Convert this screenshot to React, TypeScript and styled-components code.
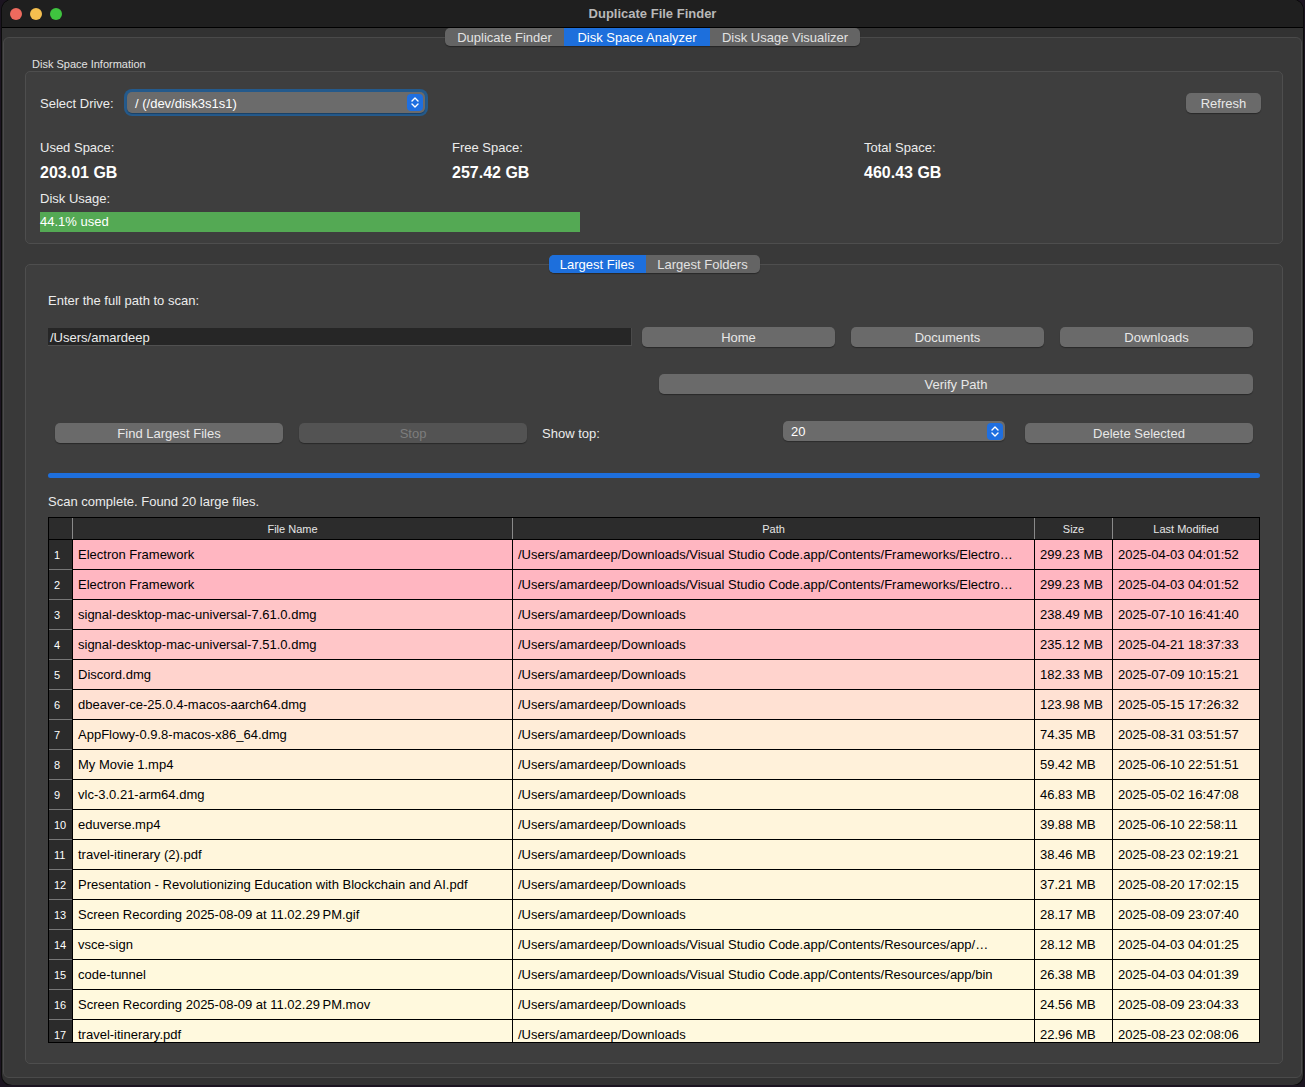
import React from 'react';
import styled, { createGlobalStyle } from 'styled-components';

const GlobalStyle = createGlobalStyle`
  html, body { margin: 0; padding: 0; background: #1b1420; }
  body { font-family: "Liberation Sans", Arial, sans-serif; -webkit-font-smoothing: antialiased; }
  * { box-sizing: border-box; }
`;

const Window = styled.div`
  margin-left: 2px;
  width: 1301px;
  height: 1085px;
  background: #323232;
  border-radius: 10px;
  overflow: hidden;
  display: flex;
  flex-direction: column;
  box-shadow: 0 0 0 1px #0c0c0c;
`;

const TitleBar = styled.div`
  height: 28px;
  flex: none;
  background: #1f1f1f;
  border-bottom: 1px solid #000;
  display: grid;
  grid-template-columns: 1fr auto 1fr;
  align-items: center;
  padding: 0 8px;
`;

const Lights = styled.div`
  display: flex;
  gap: 8px;
`;

const Light = styled.span<{ $c: string }>`
  width: 12px;
  height: 12px;
  border-radius: 50%;
  background: ${p => p.$c};
`;

const Title = styled.div`
  font-size: 13px;
  font-weight: 700;
  color: #b8b8b8;
`;

const Body = styled.div`
  flex: 1;
  display: flex;
  flex-direction: column;
  padding: 0 1px 7px 1px;
`;

const TabBar = styled.div`
  display: flex;
  justify-content: center;
  height: 18px;
  position: relative;
  z-index: 1;
  flex: none;
`;

const Segmented = styled.div`
  display: inline-flex;
  height: 18px;
  border-radius: 5px;
  background: #646464;
  overflow: hidden;
  box-shadow: 0 1px 1px rgba(0, 0, 0, 0.35);
`;

const Segment = styled.div<{ $active?: boolean; $w: number }>`
  width: ${p => p.$w}px;
  text-align: center;
  font-size: 13px;
  line-height: 17px;
  padding-top: 1px;
  color: ${p => (p.$active ? '#ffffff' : '#e2e2e2')};
  background: ${p => (p.$active ? '#1d6fdc' : 'transparent')};
  white-space: nowrap;
`;

const Pane = styled.div`
  flex: 1;
  margin-top: -9px;
  border: 1px solid #4a4a4a;
  border-radius: 6px;
  background: #393939;
  padding: 20px 18px 13px 21px;
  display: flex;
  flex-direction: column;
`;

const GroupTitle = styled.div`
  font-size: 11px;
  line-height: 13px;
  color: #e2e2e2;
  padding-left: 7px;
`;

const GroupBox = styled.div`
  border: 1px solid #4e4e4e;
  border-radius: 5px;
  background: #3e3e3e;
  padding: 17px 18px 11px 14px;
  display: flex;
  flex-direction: column;
`;

const Row = styled.div`
  display: flex;
  align-items: center;
`;

const Label = styled.div<{ $w?: number }>`
  font-size: 13px;
  line-height: 15px;
  padding-top: 1px;
  color: #ececec;
  white-space: nowrap;
  ${p => (p.$w ? `width: ${p.$w}px; flex: none;` : '')}
`;

const FocusRing = styled.div`
  width: 304px;
  height: 27px;
  padding: 3px;
  border-radius: 8px;
  background: #245a8c;
`;

const Combo = styled.div<{ $w?: number }>`
  height: ${p => (p.$w ? 20 : 21)}px;
  ${p => (p.$w ? `width: ${p.$w}px; flex: none;` : '')}
  border-radius: 5px;
  background: #6b6b6b;
  display: flex;
  align-items: center;
  justify-content: space-between;
  padding: 0 2px 0 8px;
  font-size: 13px;
  color: #ffffff;
  box-shadow: 0 1px 1px rgba(0, 0, 0, 0.3);
  span { padding-top: 1px; }
`;

const Button = styled.div<{ $w: number; $ml?: number; $disabled?: boolean }>`
  width: ${p => p.$w}px;
  margin-left: ${p => p.$ml ?? 0}px;
  flex: none;
  height: 20px;
  border-radius: 5px;
  background: ${p => (p.$disabled ? '#535353' : '#6a6a6a')};
  color: ${p => (p.$disabled ? '#7d7d7d' : '#e8e8e8')};
  font-size: 13px;
  line-height: 19px;
  padding-top: 1px;
  text-align: center;
  box-shadow: 0 1px 1px rgba(0, 0, 0, 0.35);
  white-space: nowrap;
`;

const Stats = styled.div`
  display: grid;
  grid-template-columns: repeat(3, 1fr);
  column-gap: 12px;
  margin-top: 23px;
`;

const Value = styled.div`
  margin-top: 8px;
  font-size: 16px;
  line-height: 20px;
  font-weight: 700;
  color: #ffffff;
`;

const UsageLabel = styled(Label)`
  margin-top: 7px;
`;

const UsageBar = styled.div`
  margin-top: 6px;
  height: 20px;
  display: flex;
`;

const UsageFill = styled.div`
  background: #54a954;
  color: #ffffff;
  font-size: 13px;
  line-height: 20px;
  white-space: nowrap;
`;

const InnerTabs = styled(TabBar)`
  margin-top: 11px;
`;

const GroupBox2 = styled.div`
  margin-top: -9px;
  border: 1px solid #4e4e4e;
  border-radius: 5px;
  background: #3e3e3e;
  padding: 27px 22px 20px 22px;
  display: flex;
  flex-direction: column;
`;

const PathInput = styled.div`
  width: 584px;
  height: 18px;
  flex: none;
  background: #262626;
  border-bottom: 1px solid #505050;
  border-right: 1px solid #4a4a4a;
  font-size: 13px;
  line-height: 17px;
  padding-top: 1px;
  color: #ececec;
  padding-left: 2px;
`;

const ButtonsRow = styled(Row)`
  margin-top: 19px;
  height: 20px;
`;

const VerifyRow = styled(Row)`
  margin-top: 27px;
  justify-content: flex-end;
  padding-right: 7px;
  height: 20px;
`;

const FindRow = styled.div`
  margin-top: 27px;
  height: 22px;
  display: flex;
  align-items: flex-end;
`;

const ShowTop = styled(Label)`
  align-self: center;
  margin-left: 15px;
  margin-top: 2px;
`;

const TopCombo = styled(Combo)`
  align-self: flex-start;
`;

const Progress = styled.div`
  margin-top: 30px;
  height: 5px;
  border-radius: 3px;
  background: #1e6fdc;
`;

const Status = styled(Label)`
  margin-top: 15px;
`;

const TableClip = styled.div`
  margin-top: 8px;
  width: 1212px;
  height: 526px;
  overflow: hidden;
  border: 1px solid #000;
  background: #000;
`;

const Grid = styled.div`
  display: grid;
  grid-template-columns: 23px 439px 521px 77px 1fr;
  grid-auto-rows: 29px;
  grid-template-rows: 21px;
  gap: 1px;
  background: #000;
`;

const HeadCell = styled.div<{ $first?: boolean }>`
  background: #2c2c2c;
  color: #e6e6e6;
  font-size: 11px;
  line-height: 19px;
  padding-top: 2px;
  text-align: center;
  box-shadow: ${p => (p.$first ? 'none' : '-1px 0 0 #8a8a8a')};
`;

const NumCell = styled.div<{ $first?: boolean }>`
  background: #2b2b2b;
  color: #ffffff;
  font-size: 11px;
  display: flex;
  align-items: center;
  padding-left: 5px;
  box-shadow: ${p => (p.$first ? 'none' : '0 -1px 0 #777777')};
`;

const Cell = styled.div<{ $bg: string; $pl?: number }>`
  background: ${p => p.$bg};
  color: #000;
  font-size: 13px;
  line-height: 29px;
  padding-left: ${p => p.$pl ?? 5}px;
  padding-right: 2px;
  white-space: nowrap;
  overflow: hidden;
`;

const Stepper = ({ h = 17 }: { h?: number }) => (
  <svg width="16" height={h} viewBox={`0 0 16 ${h}`}>
    <rect x="0" y="0" width="16" height={h} rx="4" fill="#1f6fe0" />
    <path d={`M5 ${h / 2 - 1.5} L8 ${h / 2 - 4.5} L11 ${h / 2 - 1.5}`} fill="none" stroke="#fff" strokeWidth="1.4" strokeLinecap="round" strokeLinejoin="round" />
    <path d={`M5 ${h / 2 + 1.5} L8 ${h / 2 + 4.5} L11 ${h / 2 + 1.5}`} fill="none" stroke="#fff" strokeWidth="1.4" strokeLinecap="round" strokeLinejoin="round" />
  </svg>
);

const DL = '/Users/amardeep/Downloads';
const VSC = '/Users/amardeep/Downloads/Visual Studio Code.app/Contents';

const rows: [string, string, number, string][] = [
  ['Electron Framework', `${VSC}/Frameworks/Electro\u2026`, 299.23, '2025-04-03 04:01:52'],
  ['Electron Framework', `${VSC}/Frameworks/Electro\u2026`, 299.23, '2025-04-03 04:01:52'],
  ['signal-desktop-mac-universal-7.61.0.dmg', DL, 238.49, '2025-07-10 16:41:40'],
  ['signal-desktop-mac-universal-7.51.0.dmg', DL, 235.12, '2025-04-21 18:37:33'],
  ['Discord.dmg', DL, 182.33, '2025-07-09 10:15:21'],
  ['dbeaver-ce-25.0.4-macos-aarch64.dmg', DL, 123.98, '2025-05-15 17:26:32'],
  ['AppFlowy-0.9.8-macos-x86_64.dmg', DL, 74.35, '2025-08-31 03:51:57'],
  ['My Movie 1.mp4', DL, 59.42, '2025-06-10 22:51:51'],
  ['vlc-3.0.21-arm64.dmg', DL, 46.83, '2025-05-02 16:47:08'],
  ['eduverse.mp4', DL, 39.88, '2025-06-10 22:58:11'],
  ['travel-itinerary (2).pdf', DL, 38.46, '2025-08-23 02:19:21'],
  ['Presentation - Revolutionizing Education with Blockchain and AI.pdf', DL, 37.21, '2025-08-20 17:02:15'],
  ['Screen Recording 2025-08-09 at 11.02.29\u202FPM.gif', DL, 28.17, '2025-08-09 23:07:40'],
  ['vsce-sign', `${VSC}/Resources/app/\u2026`, 28.12, '2025-04-03 04:01:25'],
  ['code-tunnel', `${VSC}/Resources/app/bin`, 26.38, '2025-04-03 04:01:39'],
  ['Screen Recording 2025-08-09 at 11.02.29\u202FPM.mov', DL, 24.56, '2025-08-09 23:04:33'],
  ['travel-itinerary.pdf', DL, 22.96, '2025-08-23 02:08:06'],
];

const rowColor = (size: number) => {
  const r = Math.min(1, size / 299.23);
  const g = Math.round(255 - 73 * r);
  const b = Math.round(224 - 31 * r);
  return `rgb(255, ${g}, ${b})`;
};

export default function App() {
  return (
    <>
      <GlobalStyle />
      <Window>
        <TitleBar>
          <Lights>
            <Light $c="#ed6a5e" />
            <Light $c="#f4bf4f" />
            <Light $c="#3fc43f" />
          </Lights>
          <Title>Duplicate File Finder</Title>
          <div />
        </TitleBar>
        <Body>
          <TabBar>
            <Segmented>
              <Segment $w={119}>Duplicate Finder</Segment>
              <Segment $w={146} $active>Disk Space Analyzer</Segment>
              <Segment $w={150}>Disk Usage Visualizer</Segment>
            </Segmented>
          </TabBar>
          <Pane>
            <GroupTitle>Disk Space Information</GroupTitle>
            <GroupBox>
              <Row>
                <Label $w={84}>Select Drive:</Label>
                <FocusRing>
                  <Combo>
                    <span>/ (/dev/disk3s1s1)</span>
                    <Stepper />
                  </Combo>
                </FocusRing>
                <Button $w={75} $ml={758}>Refresh</Button>
              </Row>
              <Stats>
                <div>
                  <Label>Used Space:</Label>
                  <Value>203.01 GB</Value>
                </div>
                <div>
                  <Label>Free Space:</Label>
                  <Value>257.42 GB</Value>
                </div>
                <div>
                  <Label>Total Space:</Label>
                  <Value>460.43 GB</Value>
                </div>
              </Stats>
              <UsageLabel>Disk Usage:</UsageLabel>
              <UsageBar>
                <UsageFill style={{ width: '44.1%' }}>44.1% used</UsageFill>
              </UsageBar>
            </GroupBox>

            <InnerTabs>
              <Segmented>
                <Segment $w={97} $active>Largest Files</Segment>
                <Segment $w={114}>Largest Folders</Segment>
              </Segmented>
            </InnerTabs>
            <GroupBox2>
              <Label>Enter the full path to scan:</Label>
              <ButtonsRow>
                <PathInput>/Users/amardeep</PathInput>
                <Button $w={193} $ml={10}>Home</Button>
                <Button $w={193} $ml={16}>Documents</Button>
                <Button $w={193} $ml={16}>Downloads</Button>
              </ButtonsRow>
              <VerifyRow>
                <Button $w={594}>Verify Path</Button>
              </VerifyRow>
              <FindRow>
                <Button $w={228} $ml={7}>Find Largest Files</Button>
                <Button $w={228} $ml={16} $disabled>Stop</Button>
                <ShowTop $w={241}>Show top:</ShowTop>
                <TopCombo $w={222}>
                  <span>20</span>
                  <Stepper h={17} />
                </TopCombo>
                <Button $w={228} $ml={20}>Delete Selected</Button>
              </FindRow>
              <Progress />
              <Status>Scan complete. Found 20 large files.</Status>
              <TableClip>
                <Grid>
                  <HeadCell $first />
                  <HeadCell>File Name</HeadCell>
                  <HeadCell>Path</HeadCell>
                  <HeadCell>Size</HeadCell>
                  <HeadCell>Last Modified</HeadCell>
                  {rows.map(([name, path, size, date], i) => {
                    const bg = rowColor(size);
                    return (
                      <React.Fragment key={i}>
                        <NumCell $first={i === 0}>{i + 1}</NumCell>
                        <Cell $bg={bg}>{name}</Cell>
                        <Cell $bg={bg}>{path}</Cell>
                        <Cell $bg={bg}>{size.toFixed(2)} MB</Cell>
                        <Cell $bg={bg}>{date}</Cell>
                      </React.Fragment>
                    );
                  })}
                </Grid>
              </TableClip>
            </GroupBox2>
          </Pane>
        </Body>
      </Window>
    </>
  );
}
